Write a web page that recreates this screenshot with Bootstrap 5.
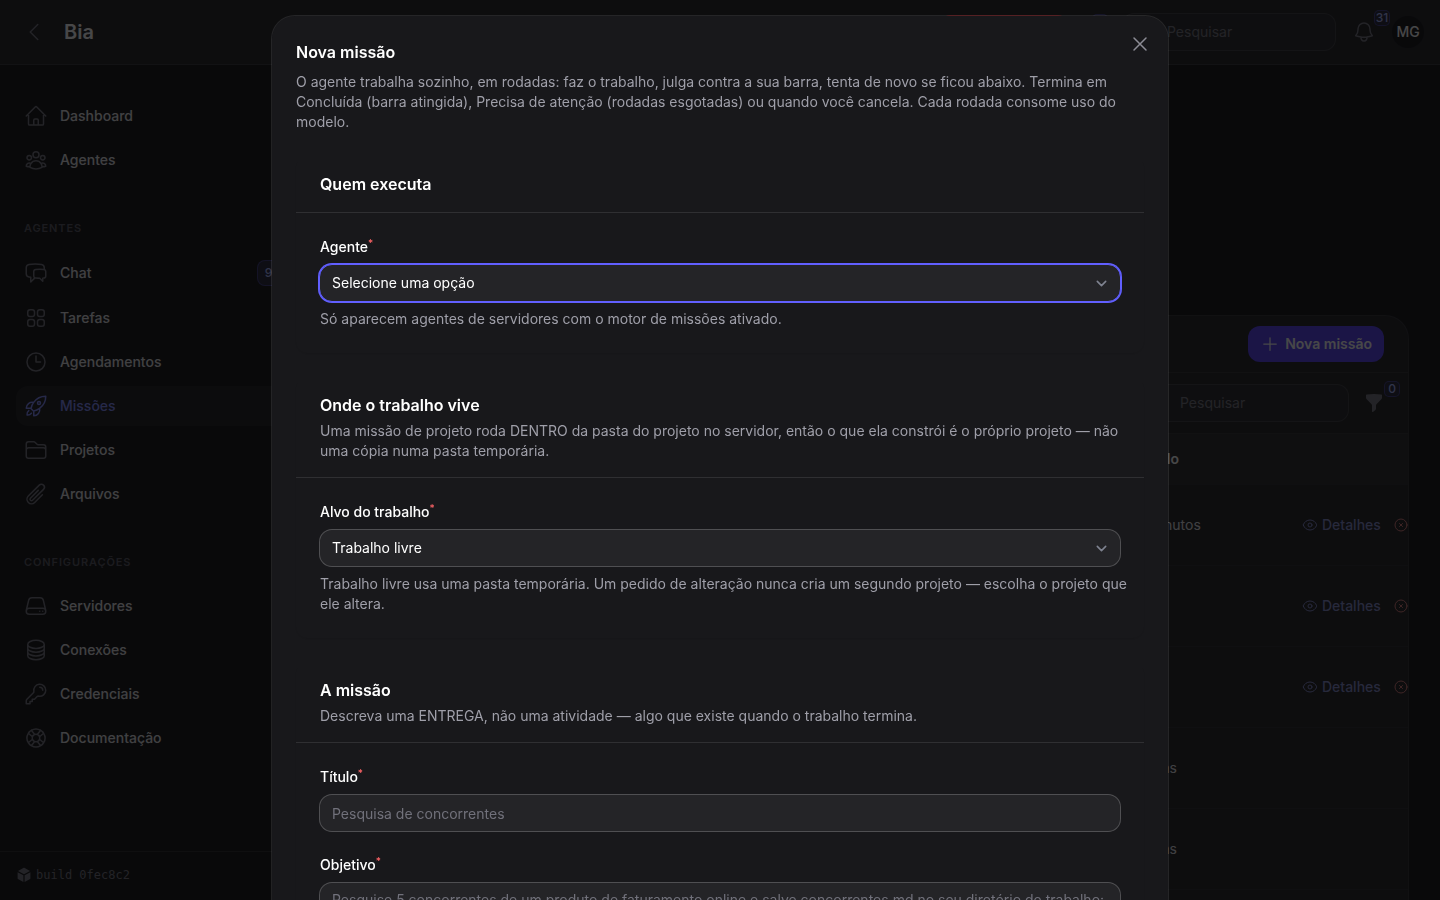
<!DOCTYPE html>
<html lang="pt-BR" data-bs-theme="dark">
<head>
<meta charset="utf-8">
<meta name="viewport" content="width=device-width, initial-scale=1">
<title>Nova missão - Bia</title>
<link href="https://cdn.jsdelivr.net/npm/bootstrap@5.3.0/dist/css/bootstrap.min.css" rel="stylesheet">
<style>
:root{--ink:#fff;--soft:#e4e4e7;--muted:#9f9fa9;--dim:#71717b;--line:rgba(255,255,255,.1);--panel:#18181b;--page:#09090b;--accent:#7c86ff;--focus:#615fff}
body{font-family:Inter,"Liberation Sans",sans-serif;font-size:14px;line-height:20px;background:var(--page);color:var(--soft);height:100vh;overflow:hidden}
.ico{width:24px;height:24px;flex:none;fill:none;stroke:currentColor;stroke-width:1.5;stroke-linecap:round;stroke-linejoin:round}
.ico-sm{width:16px;height:16px}
.ico-md{width:20px;height:20px}
.ico-solid{fill:currentColor;stroke:none}
.shell{height:100vh}
.topbar{height:65px;background:var(--panel);border-bottom:1px solid var(--line);padding:0 16px 0 22px;flex:none}
.brand{font-size:20px;line-height:28px;font-weight:600;color:var(--ink);text-decoration:none;margin-left:18px}
.back{color:var(--dim);background:none;border:0;padding:0;display:flex}
.side{width:320px;flex:none}
.side-nav{padding:31px 16px 0}
.side-link{display:flex;align-items:center;gap:12px;padding:8px;min-height:40px;border-radius:12px;color:var(--soft);font-weight:500;text-decoration:none}
.side-link .ico{color:var(--dim)}
.side-link.current,.side-link.current .ico{color:var(--accent)}
.side-link.current{background:rgba(255,255,255,.05)}
.side-link.tall{min-height:42px}
.side-label{font-size:11px;line-height:24px;font-weight:600;letter-spacing:.08em;text-transform:uppercase;color:#52525b;padding:8px}
.side-foot{border-top:1px solid var(--line);padding:14px 16px 16px;font-family:"DejaVu Sans Mono",monospace;font-size:12px;line-height:18px;color:#71717b}
.count{border:1px solid rgba(97,95,255,.35);background:#1d1c33;color:#a3b3ff;border-radius:8px;font-size:12px;line-height:16px;font-weight:500;padding:4px 7px}
.pip{position:absolute;top:-10px;left:22px;border:1px solid rgba(97,95,255,.4);background:#1d1c33;color:#a3b3ff;border-radius:5px;font-size:12px;line-height:14px;min-width:16px;height:16px;text-align:center;font-weight:500}
.find{width:214px;height:38px;border:1px solid var(--line);border-radius:12px;background:rgba(255,255,255,.03);padding:0 12px;gap:12px;color:var(--dim)}
.find input{background:none;border:0;outline:0;color:var(--ink);padding:0;min-width:0;width:100%}
.find input::placeholder{color:var(--dim)}
.icon-btn{position:relative;background:none;border:0;padding:0;color:var(--dim);display:flex}
.pulse{margin-right:28px}
.pulse .pip{top:-6px}
.filter .pip{top:-12px;left:20px}
.avatar-dot{width:32px;height:32px;border-radius:50%;background:var(--page);color:var(--ink);font-weight:500;border:0;padding:0}
.stop-btn{background:#e7000b;color:#fff;border:0;border-radius:8px;height:34px;width:124px;font-weight:600}
.main-pad{padding:32px 31px 0 32px}
.intro{height:218px}
.intro h1{font-size:30px;line-height:36px;font-weight:700}
.list-card{border:1px solid rgba(255,255,255,.07);border-radius:24px;background:var(--panel);overflow:hidden}
.list-bar{border-bottom:1px solid rgba(255,255,255,.07);padding:0 24px;height:57px}
.list-tools{border-bottom:1px solid rgba(255,255,255,.07);padding:0 24px;height:61px;gap:15px}
.new-btn{height:36px;border:0;border-radius:12px;background:#4f39f6;color:#fff;font-weight:600;padding:0 12px;gap:5px}
.runs{table-layout:fixed;width:100%;min-width:1137px;margin:0;border-collapse:collapse}
.runs th{height:50px;padding:0 12px;background:#202022;font-weight:600;color:var(--ink)}
.runs td{height:81px;padding:0 12px;border-top:1px solid rgba(255,255,255,.05)}
.runs .w-when{width:195px}
.runs .w-act{width:200px}
.act{display:inline-flex;align-items:center;gap:4px;font-weight:500;text-decoration:none;color:#7f87cc}
.act-x{color:#d87672}
.shade{position:fixed;inset:0;background:rgba(9,9,11,.75);z-index:1040}
.modal{scrollbar-width:none}
.modal::-webkit-scrollbar{display:none}
.mission-dialog{max-width:898px;margin:15px auto}
.mission{background:var(--panel);background-clip:padding-box;border:1px solid rgba(255,255,255,.1);border-radius:24px;padding:24px}
.mission h2,.block-head h3{font-size:16px;line-height:24px;font-weight:600;color:var(--ink);margin:0}
.note{color:var(--muted);margin:0}
.block .note{margin-right:-16px}
.close-x{position:absolute;top:16px;right:16px;background:none;border:0;padding:0;color:#8c8c95;display:flex}
.block{border-radius:12px;box-shadow:0 1px 1px rgba(0,0,0,.06)}
.block-head{padding:16px 24px;border-bottom:1px solid rgba(255,255,255,.1)}
.block-body{padding:24px}
.field-name{font-weight:500;color:var(--ink);margin-bottom:8px;display:block}
.field-name sup{color:#ff6467;font-size:10px;line-height:0;top:-5px}
.box{display:block;width:calc(100% + 2px);margin:-1px;height:38px;padding:0 12px;border:1px solid rgba(255,255,255,.2);border-radius:13px;background-color:#242427;color:var(--ink);font-size:14px;line-height:20px;appearance:none;outline:0}
.box::placeholder{color:var(--dim);opacity:1}
select.box{background-image:url("data:image/svg+xml,%3Csvg xmlns='http://www.w3.org/2000/svg' fill='none' viewBox='0 0 20 20'%3E%3Cpath stroke='%237f8390' stroke-linecap='round' stroke-linejoin='round' stroke-width='1.5' d='m6 8 4 4 4-4'/%3E%3C/svg%3E");background-repeat:no-repeat;background-position:right 8px center;background-size:21px}
.box.active-box{border-color:var(--focus);box-shadow:0 0 0 1px var(--focus)}
textarea.box{height:96px;padding:7px 8px 7px 12px;resize:none}
.box+.note{margin-top:8px}
</style>
</head>
<body>
<svg width="0" height="0" class="position-absolute" aria-hidden="true">
<symbol id="i-left" viewBox="0 0 24 24"><path d="M15.75 19.5 8.25 12l7.5-7.5"/></symbol>
<symbol id="i-home" viewBox="0 0 24 24"><path d="m2.25 12 8.954-8.955c.44-.439 1.152-.439 1.591 0L21.75 12M4.5 9.75v10.125c0 .621.504 1.125 1.125 1.125H9.75v-4.875c0-.621.504-1.125 1.125-1.125h2.25c.621 0 1.125.504 1.125 1.125V21h4.125c.621 0 1.125-.504 1.125-1.125V9.75M8.25 21h8.25"/></symbol>
<symbol id="i-group" viewBox="0 0 24 24"><path d="M18 18.72a9.094 9.094 0 0 0 3.741-.479 3 3 0 0 0-4.682-2.72m.94 3.198.001.031c0 .225-.012.447-.037.666A11.944 11.944 0 0 1 12 21c-2.17 0-4.207-.576-5.963-1.584A6.062 6.062 0 0 1 6 18.719m12 0a5.971 5.971 0 0 0-.941-3.197m0 0A5.995 5.995 0 0 0 12 12.75a5.995 5.995 0 0 0-5.058 2.772m0 0a3 3 0 0 0-4.681 2.72 8.986 8.986 0 0 0 3.74.477m.94-3.197a5.971 5.971 0 0 0-.94 3.197M15 6.75a3 3 0 1 1-6 0 3 3 0 0 1 6 0Zm6 3a2.25 2.25 0 1 1-4.5 0 2.25 2.25 0 0 1 4.5 0Zm-13.5 0a2.25 2.25 0 1 1-4.5 0 2.25 2.25 0 0 1 4.5 0Z"/></symbol>
<symbol id="i-chat" viewBox="0 0 24 24"><path d="M20.25 8.511c.884.284 1.5 1.128 1.5 2.097v4.286c0 1.136-.847 2.1-1.98 2.193-.34.027-.68.052-1.02.072v3.091l-3-3c-1.354 0-2.694-.055-4.02-.163a2.115 2.115 0 0 1-.825-.242m9.345-8.334a2.126 2.126 0 0 0-.476-.095 48.64 48.64 0 0 0-8.048 0c-1.131.094-1.976 1.057-1.976 2.192v4.286c0 .837.46 1.58 1.155 1.951m9.345-8.334V6.637c0-1.621-1.152-3.026-2.76-3.235A48.455 48.455 0 0 0 11.25 3c-2.115 0-4.198.137-6.24.402-1.608.209-2.76 1.614-2.76 3.235v6.226c0 1.621 1.152 3.026 2.76 3.235.577.075 1.157.14 1.74.194V21l4.155-4.155"/></symbol>
<symbol id="i-grid" viewBox="0 0 24 24"><rect x="3.75" y="3.75" width="6.75" height="6.75" rx="2.25"/><rect x="13.5" y="3.75" width="6.75" height="6.75" rx="2.25"/><rect x="3.75" y="13.5" width="6.75" height="6.75" rx="2.25"/><rect x="13.5" y="13.5" width="6.75" height="6.75" rx="2.25"/></symbol>
<symbol id="i-clock" viewBox="0 0 24 24"><path d="M12 6v6h4.5m4.5 0a9 9 0 1 1-18 0 9 9 0 0 1 18 0Z"/></symbol>
<symbol id="i-rocket" viewBox="0 0 24 24"><path d="M15.59 14.37a6 6 0 0 1-5.84 7.38v-4.8m5.84-2.58a14.98 14.98 0 0 0 6.16-12.12A14.98 14.98 0 0 0 9.631 8.41m5.96 5.96a14.926 14.926 0 0 1-5.841 2.58m-.119-8.54a6 6 0 0 0-7.381 5.84h4.8m2.581-5.84a14.927 14.927 0 0 0-2.58 5.84m2.699 2.7c-.103.021-.207.041-.311.06a15.09 15.09 0 0 1-2.448-2.448 14.9 14.9 0 0 1 .06-.312m-2.24 2.39a4.493 4.493 0 0 0-1.757 4.306 4.493 4.493 0 0 0 4.306-1.758M16.5 9a1.5 1.5 0 1 1-3 0 1.5 1.5 0 0 1 3 0Z"/></symbol>
<symbol id="i-folder" viewBox="0 0 24 24"><path d="M2.25 12.75V12A2.25 2.25 0 0 1 4.5 9.75h15A2.25 2.25 0 0 1 21.75 12v.75m-8.69-6.44-2.12-2.12a1.5 1.5 0 0 0-1.061-.44H4.5A2.25 2.25 0 0 0 2.25 6v12a2.25 2.25 0 0 0 2.25 2.25h15A2.25 2.25 0 0 0 21.75 18V9a2.25 2.25 0 0 0-2.25-2.25h-5.379a1.5 1.5 0 0 1-1.06-.44Z"/></symbol>
<symbol id="i-clip" viewBox="0 0 24 24"><path d="m18.375 12.739-7.693 7.693a4.5 4.5 0 0 1-6.364-6.364l10.94-10.94A3 3 0 1 1 19.5 7.372L8.552 18.32m.009-.01-.01.01m5.699-9.941-7.81 7.81a1.5 1.5 0 0 0 2.112 2.13"/></symbol>
<symbol id="i-server" viewBox="0 0 24 24"><path d="M21.75 17.25v-.228a4.5 4.5 0 0 0-.12-1.03l-2.268-9.64a3.375 3.375 0 0 0-3.285-2.602H7.923a3.375 3.375 0 0 0-3.285 2.602l-2.268 9.64a4.5 4.5 0 0 0-.12 1.03v.228m19.5 0a3 3 0 0 1-3 3H5.25a3 3 0 0 1-3-3m19.5 0a3 3 0 0 0-3-3H5.25a3 3 0 0 0-3 3m16.5 0h.008v.008h-.008v-.008Zm-3 0h.008v.008h-.008v-.008Z"/></symbol>
<symbol id="i-stack" viewBox="0 0 24 24"><path d="M20.25 6.375c0 2.278-3.694 4.125-8.25 4.125S3.75 8.653 3.75 6.375m16.5 0c0-2.278-3.694-4.125-8.25-4.125S3.75 4.097 3.75 6.375m16.5 0v11.25c0 2.278-3.694 4.125-8.25 4.125s-8.25-1.847-8.25-4.125V6.375m16.5 0v3.75m-16.5-3.75v3.75m16.5 0v3.75C20.25 16.153 16.556 18 12 18s-8.25-1.847-8.25-4.125v-3.75m16.5 0c0 2.278-3.694 4.125-8.25 4.125s-8.25-1.847-8.25-4.125"/></symbol>
<symbol id="i-key" viewBox="0 0 24 24"><path d="M15.75 5.25a3 3 0 0 1 3 3m3 0a6 6 0 0 1-7.029 5.912c-.563-.097-1.159.026-1.563.43L10.5 17.25H8.25v2.25H6v2.25H2.25v-2.818c0-.597.237-1.17.659-1.591l6.499-6.499c.404-.404.527-1 .43-1.563A6 6 0 1 1 21.75 8.25Z"/></symbol>
<symbol id="i-buoy" viewBox="0 0 24 24"><path d="M16.712 4.33a9.027 9.027 0 0 1 1.652 1.306c.51.51.944 1.064 1.306 1.652M16.712 4.33l-3.448 4.138m3.448-4.138a9.014 9.014 0 0 0-9.424 0M19.67 7.288l-4.138 3.448m4.138-3.448a9.014 9.014 0 0 1 0 9.424m-4.138-5.976a3.736 3.736 0 0 0-.88-1.388 3.737 3.737 0 0 0-1.388-.88m2.268 2.268a3.765 3.765 0 0 1 0 2.528m-2.268-4.796a3.765 3.765 0 0 0-2.528 0m4.796 4.796c-.181.506-.475.982-.88 1.388a3.736 3.736 0 0 1-1.388.88m2.268-2.268 4.138 3.448m0 0a9.027 9.027 0 0 1-1.306 1.652c-.51.51-1.064.944-1.652 1.306m0 0-3.448-4.138m3.448 4.138a9.014 9.014 0 0 1-9.424 0m5.976-4.138a3.765 3.765 0 0 1-2.528 0m0 0a3.736 3.736 0 0 1-1.388-.88 3.737 3.737 0 0 1-.88-1.388m2.268 2.268L7.288 19.67m0 0a9.024 9.024 0 0 1-1.652-1.306 9.027 9.027 0 0 1-1.306-1.652m0 0 4.138-3.448M4.33 16.712a9.014 9.014 0 0 1 0-9.424m4.138 5.976a3.765 3.765 0 0 1 0-2.528m0 0c.181-.506.475-.982.88-1.388a3.736 3.736 0 0 1 1.388-.88m-2.268 2.268L4.33 7.288m6.406 1.18L7.288 4.33m0 0a9.024 9.024 0 0 0-1.652 1.306A9.025 9.025 0 0 0 4.33 7.288"/></symbol>
<symbol id="i-bell" viewBox="0 0 24 24"><path d="M14.857 17.082a23.848 23.848 0 0 0 5.454-1.31A8.967 8.967 0 0 1 18 9.75V9A6 6 0 0 0 6 9v.75a8.967 8.967 0 0 1-2.312 6.022c1.733.64 3.56 1.085 5.455 1.31m5.714 0a24.255 24.255 0 0 1-5.714 0m5.714 0a3 3 0 1 1-5.714 0"/></symbol>
<symbol id="i-search" viewBox="0 0 24 24"><path d="m21 21-5.197-5.197m0 0A7.5 7.5 0 1 0 5.196 5.196a7.5 7.5 0 0 0 10.607 10.607Z"/></symbol>
<symbol id="i-plus" viewBox="0 0 24 24"><path d="M12 4.5v15m7.5-7.5h-15"/></symbol>
<symbol id="i-eye" viewBox="0 0 24 24"><path d="M2.036 12.322a1.012 1.012 0 0 1 0-.639C3.423 7.51 7.36 4.5 12 4.5c4.638 0 8.573 3.007 9.963 7.178.07.207.07.431 0 .639C20.577 16.49 16.64 19.5 12 19.5c-4.638 0-8.573-3.007-9.963-7.178Z"/><circle cx="12" cy="12" r="3"/></symbol>
<symbol id="i-xc" viewBox="0 0 24 24"><path d="m9.75 9.75 4.5 4.5m0-4.5-4.5 4.5M21 12a9 9 0 1 1-18 0 9 9 0 0 1 18 0Z"/></symbol>
<symbol id="i-x" viewBox="0 0 24 24"><path d="M6 18 18 6M6 6l12 12"/></symbol>
<symbol id="i-funnel" viewBox="0 0 20 20"><path d="M2.628 1.601C5.028 1.206 7.49 1 10 1s4.973.206 7.372.601a.75.75 0 0 1 .628.74v2.288a2.25 2.25 0 0 1-.659 1.59l-4.682 4.683a2.25 2.25 0 0 0-.659 1.59v3.037c0 .684-.31 1.33-.844 1.757l-1.937 1.55A.75.75 0 0 1 8 18.25v-5.757a2.25 2.25 0 0 0-.659-1.591L2.659 6.22A2.25 2.25 0 0 1 2 4.629V2.34a.75.75 0 0 1 .628-.74Z"/></symbol>
<symbol id="i-cube" viewBox="0 0 20 20"><path d="M10.362 1.093a.75.75 0 0 0-.724 0L2.523 5.018 10 9.143l7.477-4.125-7.115-3.925ZM18 6.443l-7.25 4v8.25l6.862-3.786A.75.75 0 0 0 18 14.25V6.443ZM9.25 18.693v-8.25l-7.25-4v7.807a.75.75 0 0 0 .388.657l6.862 3.786Z"/></symbol>
</svg>

<div class="shell d-flex flex-column">
  <header class="topbar d-flex align-items-center">
    <button class="back" type="button" aria-label="Recolher menu"><svg class="ico"><use href="#i-left"/></svg></button>
    <a class="brand" href="#">Bia</a>
    <div class="ms-auto d-flex align-items-center">
      <button class="stop-btn me-1" type="button">Parar</button>
      <button class="icon-btn pulse" type="button" aria-label="Atividade"><svg class="ico"><use href="#i-clock"/></svg><span class="pip"></span></button>
      <div class="find d-flex align-items-center"><svg class="ico ico-md"><use href="#i-search"/></svg><input type="search" aria-label="Pesquisa global" placeholder="Pesquisar"></div>
      <button class="icon-btn ms-3 me-3" type="button" aria-label="Notificações"><svg class="ico"><use href="#i-bell"/></svg><span class="pip">31</span></button>
      <button class="avatar-dot" type="button">MG</button>
    </div>
  </header>
  <div class="d-flex flex-grow-1 overflow-hidden">
    <aside class="side d-flex flex-column">
      <nav class="side-nav flex-grow-1 d-flex flex-column gap-1">
        <a class="side-link" href="#"><svg class="ico"><use href="#i-home"/></svg>Dashboard</a>
        <a class="side-link" href="#"><svg class="ico"><use href="#i-group"/></svg>Agentes</a>
        <div class="side-label mt-4">Agentes</div>
        <a class="side-link tall" href="#"><svg class="ico"><use href="#i-chat"/></svg>Chat<span class="count ms-auto">99+</span></a>
        <a class="side-link" href="#"><svg class="ico"><use href="#i-grid"/></svg>Tarefas</a>
        <a class="side-link" href="#"><svg class="ico"><use href="#i-clock"/></svg>Agendamentos</a>
        <a class="side-link current" href="#" aria-current="page"><svg class="ico"><use href="#i-rocket"/></svg>Missões</a>
        <a class="side-link" href="#"><svg class="ico"><use href="#i-folder"/></svg>Projetos</a>
        <a class="side-link" href="#"><svg class="ico"><use href="#i-clip"/></svg>Arquivos</a>
        <div class="side-label mt-4">Configurações</div>
        <a class="side-link" href="#"><svg class="ico"><use href="#i-server"/></svg>Servidores</a>
        <a class="side-link" href="#"><svg class="ico"><use href="#i-stack"/></svg>Conexões</a>
        <a class="side-link" href="#"><svg class="ico"><use href="#i-key"/></svg>Credenciais</a>
        <a class="side-link" href="#"><svg class="ico"><use href="#i-buoy"/></svg>Documentação</a>
      </nav>
      <div class="side-foot d-flex align-items-center gap-1"><svg class="ico ico-sm ico-solid"><use href="#i-cube"/></svg><span>build 0fec8c2</span></div>
    </aside>
    <main class="main-pad flex-grow-1 overflow-hidden">
      <div class="intro"><h1>Missões</h1></div>
      <section class="list-card">
        <div class="list-bar d-flex justify-content-end align-items-center"><button class="new-btn d-flex align-items-center" type="button"><svg class="ico ico-md"><use href="#i-plus"/></svg>Nova missão</button></div>
        <div class="list-tools d-flex justify-content-end align-items-center">
          <div class="find d-flex align-items-center"><svg class="ico ico-md"><use href="#i-search"/></svg><input type="search" aria-label="Pesquisar missões" placeholder="Pesquisar"></div>
          <button class="icon-btn filter" type="button" aria-label="Filtros"><svg class="ico ico-md ico-solid"><use href="#i-funnel"/></svg><span class="pip">0</span></button>
        </div>
        <table class="runs">
          <thead><tr><th></th><th class="w-when">Atualizado</th><th class="w-act"></th></tr></thead>
          <tbody>
            <tr><td></td><td>há 20 minutos</td><td><div class="d-flex align-items-center gap-2"><a class="act me-1" href="#"><svg class="ico ico-sm"><use href="#i-eye"/></svg>Detalhes</a><a class="act act-x" href="#" aria-label="Cancelar"><svg class="ico ico-sm"><use href="#i-xc"/></svg></a></div></td></tr>
            <tr><td></td><td></td><td><div class="d-flex align-items-center gap-2"><a class="act me-1" href="#"><svg class="ico ico-sm"><use href="#i-eye"/></svg>Detalhes</a><a class="act act-x" href="#" aria-label="Cancelar"><svg class="ico ico-sm"><use href="#i-xc"/></svg></a></div></td></tr>
            <tr><td></td><td></td><td><div class="d-flex align-items-center gap-2"><a class="act me-1" href="#"><svg class="ico ico-sm"><use href="#i-eye"/></svg>Detalhes</a><a class="act act-x" href="#" aria-label="Cancelar"><svg class="ico ico-sm"><use href="#i-xc"/></svg></a></div></td></tr>
            <tr><td></td><td>há 6 horas</td><td></td></tr>
            <tr><td></td><td>há 6 horas</td><td></td></tr>
            <tr><td></td><td></td><td></td></tr>
          </tbody>
        </table>
      </section>
    </main>
  </div>
</div>

<div class="shade"></div>
<div class="modal show d-block" tabindex="-1" role="dialog" aria-modal="true" aria-labelledby="mission-title">
  <div class="modal-dialog mission-dialog">
    <form class="modal-content mission">
      <button class="close-x" type="button" aria-label="Fechar"><svg class="ico"><use href="#i-x"/></svg></button>
      <h2 id="mission-title">Nova missão</h2>
      <p class="note mt-2 mb-4">O agente trabalha sozinho, em rodadas: faz o trabalho, julga contra a sua barra, tenta de novo se ficou abaixo. Termina em Concluída (barra atingida), Precisa de atenção (rodadas esgotadas) ou quando você cancela. Cada rodada consome uso do modelo.</p>
      <div class="d-flex flex-column gap-4">
        <section class="block">
          <div class="block-head"><h3>Quem executa</h3></div>
          <div class="block-body">
            <label class="field-name" for="agent">Agente<sup>*</sup></label>
            <select class="box active-box" id="agent"><option>Selecione uma opção</option></select>
            <p class="note">Só aparecem agentes de servidores com o motor de missões ativado.</p>
          </div>
        </section>
        <section class="block">
          <div class="block-head"><h3>Onde o trabalho vive</h3><p class="note mt-1">Uma missão de projeto roda DENTRO da pasta do projeto no servidor, então o que ela constrói é o próprio projeto — não uma cópia numa pasta temporária.</p></div>
          <div class="block-body">
            <label class="field-name" for="target">Alvo do trabalho<sup>*</sup></label>
            <select class="box" id="target"><option>Trabalho livre</option></select>
            <p class="note">Trabalho livre usa uma pasta temporária. Um pedido de alteração nunca cria um segundo projeto — escolha o projeto que ele altera.</p>
          </div>
        </section>
        <section class="block">
          <div class="block-head"><h3>A missão</h3><p class="note mt-1">Descreva uma ENTREGA, não uma atividade — algo que existe quando o trabalho termina.</p></div>
          <div class="block-body d-flex flex-column gap-4">
            <div><label class="field-name" for="name">Título<sup>*</sup></label><input class="box" id="name" type="text" placeholder="Pesquisa de concorrentes"></div>
            <div><label class="field-name" for="goal">Objetivo<sup>*</sup></label><textarea class="box" id="goal" placeholder="Pesquise 5 concorrentes de um produto de faturamento online e salve concorrentes.md no seu diretório de trabalho:"></textarea></div>
          </div>
        </section>
      </div>
    </form>
  </div>
</div>
<script src="https://cdn.jsdelivr.net/npm/bootstrap@5.3.0/dist/js/bootstrap.bundle.min.js"></script>
</body>
</html>
